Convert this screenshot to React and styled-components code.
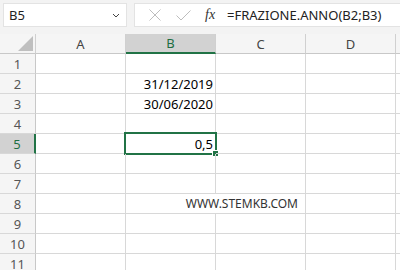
import React from "react";
import styled, { createGlobalStyle } from "styled-components";

const GlobalStyle = createGlobalStyle`
  html, body {
    margin: 0;
    padding: 0;
    background: #ffffff;
  }
  body {
    width: 400px;
    height: 270px;
    overflow: hidden;
    font-family: "Noto Sans", "Liberation Sans", sans-serif;
  }
`;

const Page = styled.div`
  width: 400px;
  height: 270px;
  overflow: hidden;
  background: #ffffff;
`;

const TopBar = styled.div`
  display: flex;
  align-items: flex-start;
  gap: 7px;
  height: 34px;
  padding: 3px 0 0 3px;
  box-sizing: border-box;
  background: #f3f3f3;
`;

const NameBox = styled.div`
  display: flex;
  align-items: center;
  justify-content: space-between;
  width: 124px;
  height: 24px;
  box-sizing: border-box;
  padding: 0 6px 0 5px;
  background: #ffffff;
  border: 1px solid #e3e3e3;
  font-size: 13px;
  color: #222;
`;

const FormulaBox = styled.div`
  flex: 1;
  display: flex;
  align-items: center;
  height: 24px;
  box-sizing: border-box;
  background: #ffffff;
  border: 1px solid #e3e3e3;
  border-right: none;
  padding-left: 9px;
`;

const IconSlot = styled.span`
  display: flex;
  align-items: center;
  justify-content: center;
  width: ${(p) => p.w}px;
  height: 22px;
`;

const Fx = styled.span`
  font-family: "Liberation Serif", "DejaVu Serif", serif;
  font-style: italic;
  font-size: 14px;
  color: #333;
  width: 26px;
  padding-left: 5px;
  box-sizing: border-box;
`;

const FormulaText = styled.span`
  font-size: 13px;
  color: #222;
  white-space: nowrap;
  padding-left: 1px;
`;

const Sheet = styled.div`
  display: grid;
  grid-template-columns: 36px repeat(5, 90px);
  grid-auto-rows: 20px;
`;

const Cell = styled.div`
  position: relative;
  box-sizing: border-box;
  border-right: ${(p) => (p.noRight ? "none" : "1px solid #d8d8d8")};
  border-bottom: 1px solid #d8d8d8;
  display: flex;
  align-items: center;
  justify-content: flex-end;
  padding-right: 2px;
  font-size: 13px;
  color: #000;
  white-space: nowrap;
  grid-column: ${(p) => p.span || "auto"};
`;

const ColHead = styled.div`
  position: relative;
  box-sizing: border-box;
  background: ${(p) => (p.active ? "#d2d2d2" : "#f5f5f5")};
  border-right: 1px solid #d0d0d0;
  border-bottom: ${(p) => (p.active ? "2px solid #217346" : "1px solid #c8c8c8")};
  display: flex;
  align-items: center;
  justify-content: center;
  font-size: 13px;
  color: ${(p) => (p.active ? "#1e6e42" : "#444")};
`;

const Corner = styled(ColHead)`
  align-items: flex-end;
  justify-content: flex-end;
  padding: 0 2px 2px 0;
`;

const RowHead = styled.div`
  box-sizing: border-box;
  background: ${(p) => (p.active ? "#d2d2d2" : "#f5f5f5")};
  border-right: ${(p) => (p.active ? "2px solid #217346" : "1px solid #c8c8c8")};
  border-bottom: 1px solid #d8d8d8;
  display: flex;
  align-items: center;
  justify-content: center;
  font-size: 13px;
  color: ${(p) => (p.active ? "#1e6e42" : "#555")};
`;

const Selection = styled.div`
  position: absolute;
  top: -2px;
  left: -2px;
  right: -2px;
  bottom: -2px;
  border: 2px solid #217346;
  pointer-events: none;
`;

const Handle = styled.div`
  position: absolute;
  right: -4px;
  bottom: -4px;
  width: 5px;
  height: 5px;
  background: #217346;
  border: 1px solid #ffffff;
`;

const SiteText = styled.span`
  font-size: 12px;
  color: #333;
  padding-right: 5px;
`;

const columns = ["A", "B", "C", "D", "E"];

const data = {
  2: { B: "31/12/2019" },
  3: { B: "30/06/2020" },
  5: { B: "0,5" },
};

function Row({ n }) {
  if (n === 8) {
    return (
      <>
        <RowHead>{n}</RowHead>
        <Cell />
        <Cell span="span 2">
          <SiteText>WWW.STEMKB.COM</SiteText>
        </Cell>
        <Cell />
        <Cell noRight />
      </>
    );
  }
  return (
    <>
      <RowHead active={n === 5}>{n}</RowHead>
      {columns.map((c) => {
        const selected = n === 5 && c === "B";
        return (
          <Cell key={c} noRight={c === "E"}>
            {data[n] && data[n][c]}
            {selected && (
              <Selection>
                <Handle />
              </Selection>
            )}
          </Cell>
        );
      })}
    </>
  );
}

export default function App() {
  const rows = [1, 2, 3, 4, 5, 6, 7, 8, 9, 10, 11];
  return (
    <Page>
      <GlobalStyle />
      <TopBar>
        <NameBox>
          <span>B5</span>
          <svg width="8" height="5" viewBox="0 0 8 5">
            <path d="M1 1 L4 4 L7 1" fill="none" stroke="#444" strokeWidth="1" />
          </svg>
        </NameBox>
        <FormulaBox>
          <IconSlot w={22}>
            <svg width="12" height="12" viewBox="0 0 12 12">
              <path d="M0.5 0.5 L11.5 11.5 M11.5 0.5 L0.5 11.5" stroke="#bdbdbd" strokeWidth="1" />
            </svg>
          </IconSlot>
          <IconSlot w={34}>
            <svg width="15" height="11" viewBox="0 0 15 11">
              <path d="M0.5 5.5 L5 10 L14.5 0.5" fill="none" stroke="#bdbdbd" strokeWidth="1" />
            </svg>
          </IconSlot>
          <Fx>fx</Fx>
          <FormulaText>=FRAZIONE.ANNO(B2;B3)</FormulaText>
        </FormulaBox>
      </TopBar>
      <Sheet>
        <Corner>
          <svg width="15" height="15" viewBox="0 0 15 15">
            <polygon points="15,0 15,15 0,15" fill="#bfbfbf" />
          </svg>
        </Corner>
        {columns.map((c) => (
          <ColHead key={c} active={c === "B"}>
            {c === "E" ? "" : c}
          </ColHead>
        ))}
        {rows.map((n) => (
          <Row key={n} n={n} />
        ))}
      </Sheet>
    </Page>
  );
}
